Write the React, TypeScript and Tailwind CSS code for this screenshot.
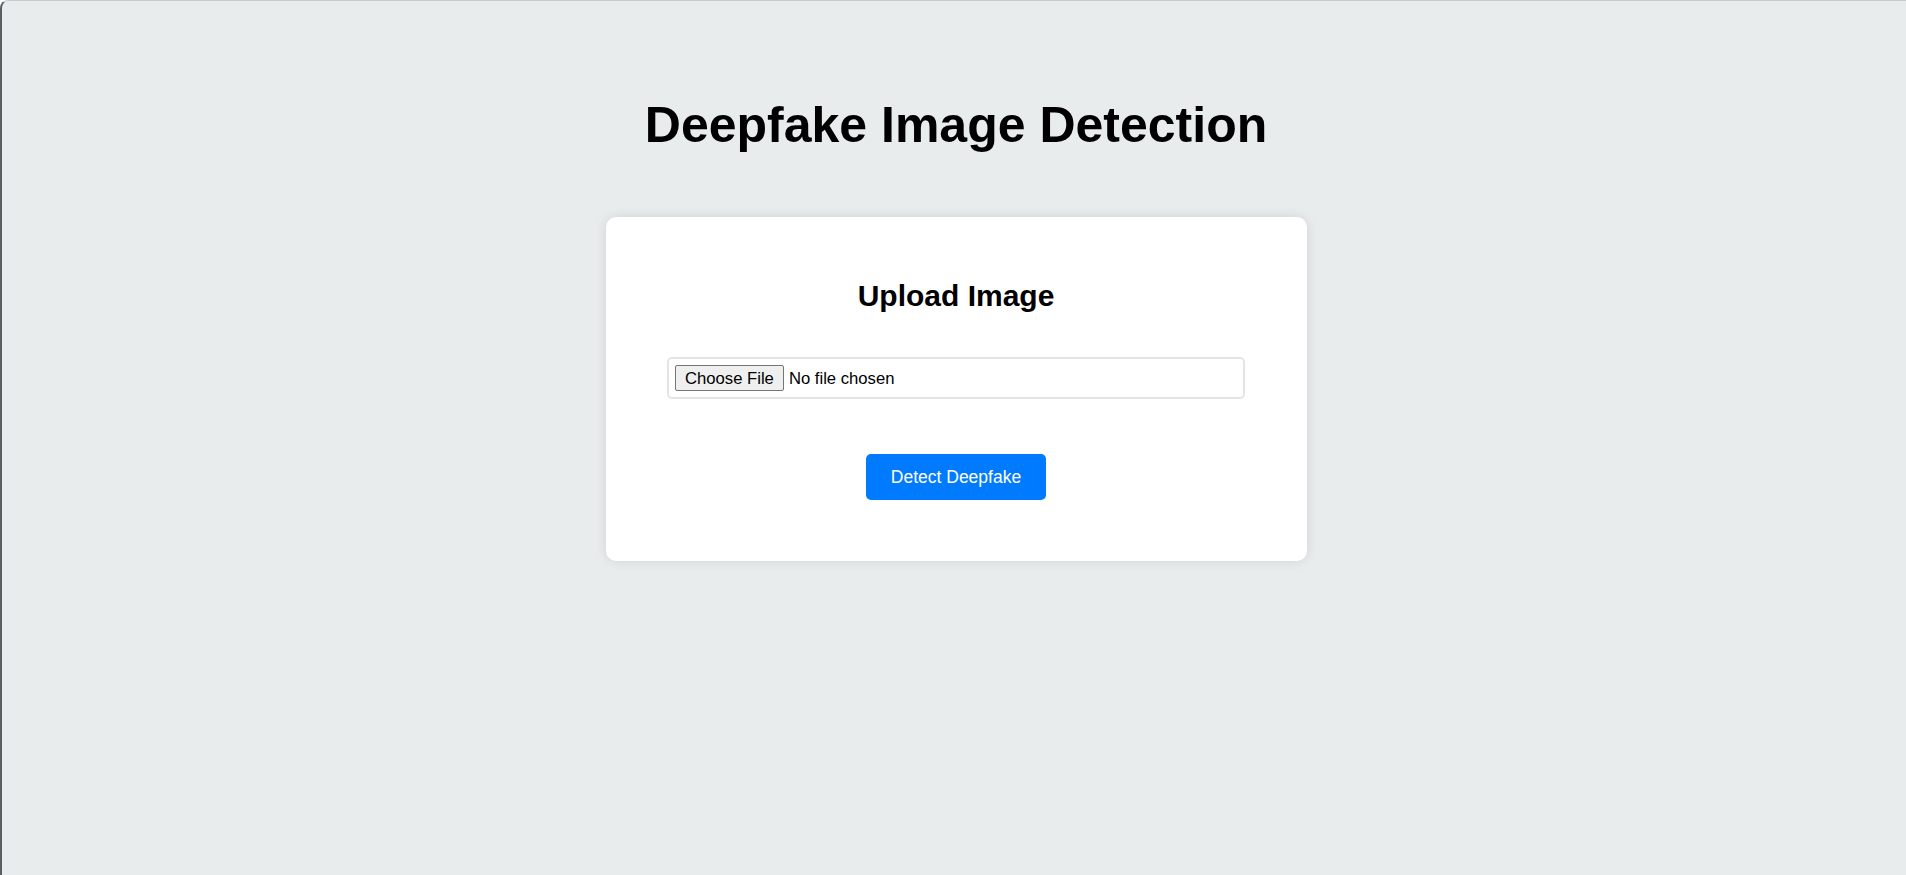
import { useState } from 'react';

export default function App() {
  const [fileName, setFileName] = useState<string | null>(null);

  return (
    <div className="min-h-screen bg-[#e8eced] border-l-2 border-l-[#5c5f63] border-t border-t-[#c9cccf] rounded-tl-[8px] font-['Liberation_Sans',Arial,sans-serif] text-black">
      <div className="flex flex-col items-center pl-[4px]">
        {/* Title */}
        <h1 className="mt-[95px] text-[50px] leading-[58px] font-bold">
          Deepfake Image Detection
        </h1>

        {/* Upload card */}
        <div className="mt-[63px] w-[701px] bg-white rounded-[10px] shadow-[0_0_12px_rgba(0,0,0,0.1)] pt-[61px] pb-[61px] flex flex-col items-center">
          <h2 className="text-[30px] leading-[35px] font-bold">Upload Image</h2>

          <input
            type="file"
            accept="image/*"
            onChange={(e) => setFileName(e.target.files?.[0]?.name ?? null)}
            className="mt-[44px] w-[578px] h-[42px] px-[6px] py-[6px] border-2 border-[#e4e4e4] rounded-[5px] text-[16.67px] leading-[19px] bg-white file:mr-[5px] file:h-[26px] file:px-[9px] file:border file:border-[#767676] file:bg-[#efefef] file:rounded-[2px] file:text-black"
          />

          <button
            type="button"
            className="mt-[55px] h-[46px] px-[25px] bg-[#007bff] text-white text-[17.5px] leading-[20px] rounded-[5px] hover:bg-[#0069d9] transition-colors"
            title={fileName ?? undefined}
          >
            Detect Deepfake
          </button>
        </div>
      </div>
    </div>
  );
}
